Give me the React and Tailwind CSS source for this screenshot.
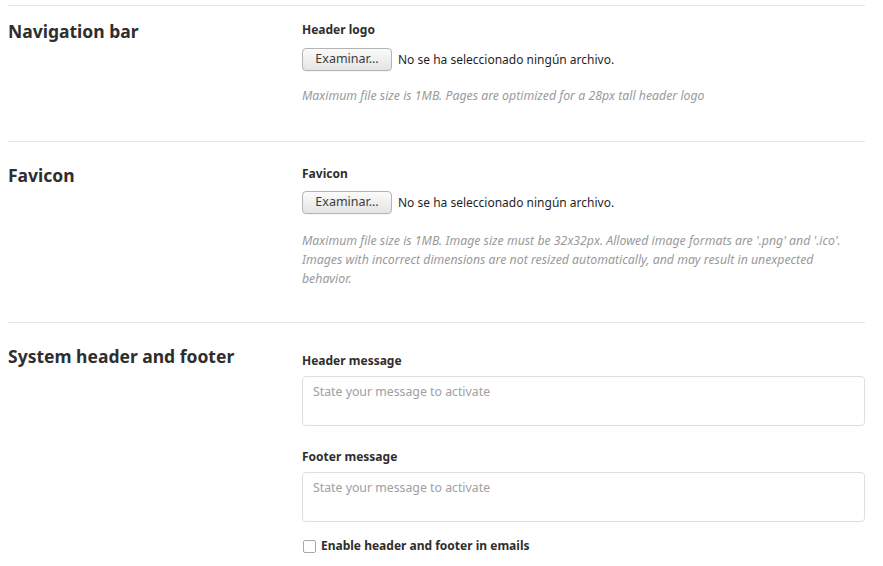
import React from "react";

const font = { fontFamily: '"Noto Sans", "Open Sans", sans-serif' };

function FileButton() {
  return (
    <div className="flex items-center gap-[6px]">
      <button className="h-[23px] w-[90px] rounded-[4px] border border-[#b4b4b4] bg-gradient-to-b from-[#fbfbfb] to-[#e4e4e4] text-[12.5px] text-[#3c3c3c] shadow-[0_1px_0_rgba(0,0,0,0.04)]">
        Examinar…
      </button>
      <span className="text-[12px] text-[#1f1f1f]">No se ha seleccionado ningún archivo.</span>
    </div>
  );
}

function Row({ title, children, first }) {
  return (
    <div className="flex border-t border-[#e5e5e5]">
      <div className="w-[294px] shrink-0">
        <h4 className={`${first ? "pt-[12px]" : "pt-[20px]"} text-[17.5px] font-bold leading-[26px] text-[#2e2e2e]`}>
          {title}
        </h4>
      </div>
      <div className="flex-1">{children}</div>
    </div>
  );
}

const areaCls =
  "block h-[50px] w-full resize-none rounded-[4px] border border-[#dfdfdf] px-[10px] py-[6px] text-[12.3px] text-[#2e2e2e] placeholder:text-[#a0a0a0] outline-none";

export default function App() {
  return (
    <div className="bg-white pl-[8px] pr-[18px] pt-[5px] text-[#2e2e2e]" style={font}>
      <Row title="Navigation bar" first>
        <div className="pt-[15px] pb-[36px]">
          <label className="block text-[12px] font-bold leading-[18px]">Header logo</label>
          <div className="mt-[9px]">
            <FileButton />
          </div>
          <p className="mt-[15px] text-[12.3px] italic leading-[19px] text-[#9a9a9a]">
            Maximum file size is 1MB. Pages are optimized for a 28px tall header logo
          </p>
        </div>
      </Row>
      <Row title="Favicon">
        <div className="pt-[23px] pb-[34px]">
          <label className="block text-[12px] font-bold leading-[18px]">Favicon</label>
          <div className="mt-[8px]">
            <FileButton />
          </div>
          <p className="mt-[17px] text-[12.3px] italic leading-[19px] text-[#9a9a9a]">
            Maximum file size is 1MB. Image size must be 32x32px. Allowed image formats are '.png' and '.ico'. Images with incorrect dimensions are not resized automatically, and may result in unexpected behavior.
          </p>
        </div>
      </Row>
      <Row title="System header and footer">
        <div className="pt-[29px]">
          <label className="block text-[12px] font-bold leading-[18px]">Header message</label>
          <textarea placeholder="State your message to activate" className={`mt-[6px] ${areaCls}`} />
          <label className="mt-[22px] block text-[12px] font-bold leading-[18px]">Footer message</label>
          <textarea placeholder="State your message to activate" className={`mt-[6px] ${areaCls}`} />
          <label className="mt-[15px] flex items-center gap-[5px] text-[12px] font-bold leading-[18px]">
            <input
              type="checkbox"
              className="ml-[1px] h-[13px] w-[13px] appearance-none rounded-[2px] border border-[#a8a8a8] bg-white"
            />
            Enable header and footer in emails
          </label>
        </div>
      </Row>
    </div>
  );
}
